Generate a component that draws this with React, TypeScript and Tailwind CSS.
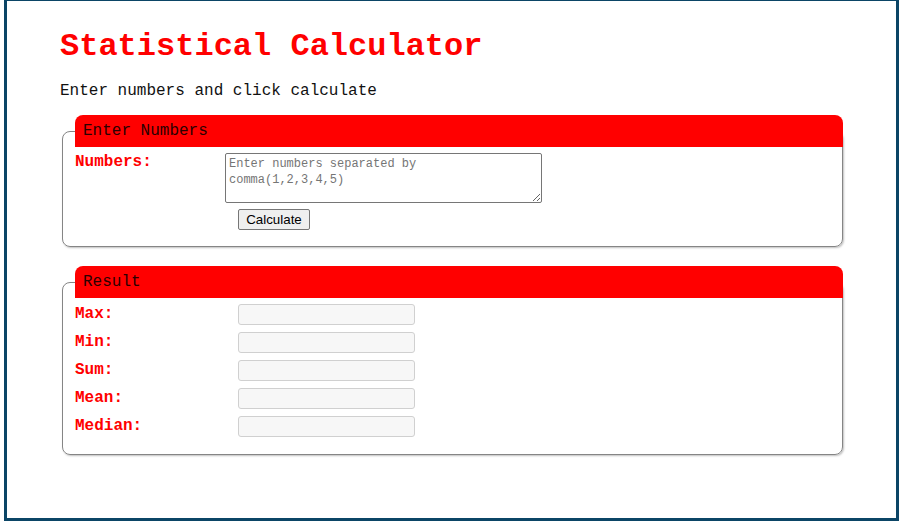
import React from "react";

const mono = "font-['Liberation_Mono','Courier_New',monospace]";

function ResultRow({ label }: { label: string }) {
  return (
    <div className="flex items-center h-[21px]">
      <span className={`w-[163px] mt-[-2px] text-[16px] leading-[18px] font-bold text-[#ff0000] ${mono}`}>{label}</span>
      <input
        readOnly
        className="w-[177px] h-[21px] bg-[#f7f7f7] border border-[#d0d0d0] rounded-[3px] outline-none"
      />
    </div>
  );
}

export default function App() {
  return (
    <div className="bg-white w-[902px] h-[521px] overflow-hidden">
      <div className="mt-[-2px] ml-[4px] w-[895px] h-[523px] border-[3px] border-[#0b4566] pl-[53px] pt-[28px]">
        <h1 className={`text-[32px] leading-[36px] font-bold text-[#ff0000] ${mono}`}>Statistical Calculator</h1>
        <p className={`mt-[17px] text-[16px] leading-[18px] text-[#111] ${mono}`}>Enter numbers and click calculate</p>

        <fieldset className="mt-[15px] ml-[2px] w-[781px] min-w-0 border border-[#858585] rounded-lg px-[12px] pb-[16px] shadow-[1px_1px_2px_rgba(0,0,0,0.25)]">
          <legend className={`w-[768px] h-[32px] bg-[#ff0000] rounded-t-lg pl-[8px] text-[16px] leading-[32px] text-[#2a0000] ${mono}`}>
            Enter Numbers
          </legend>
          <div className="flex pt-[6px]">
            <span className={`w-[150px] text-[16px] leading-[18px] font-bold text-[#ff0000] ${mono}`}>Numbers:</span>
            <div className="flex flex-col items-start">
              <textarea
                placeholder={"Enter numbers separated by\ncomma(1,2,3,4,5)"}
                className={`w-[317px] h-[50px] border border-[#767676] rounded-[2px] px-[3px] py-[2px] text-[12px] leading-[16px] placeholder:text-[#757575] outline-none resize ${mono}`}
              />
              <button className="mt-[6px] ml-[13px] w-[72px] h-[21px] bg-[#efefef] border border-[#767676] rounded-[2px] text-[13.33px] leading-[15px] text-black font-['Liberation_Sans',Arial,sans-serif]">
                Calculate
              </button>
            </div>
          </div>
        </fieldset>

        <fieldset className="mt-[19px] ml-[2px] w-[781px] min-w-0 border border-[#858585] rounded-lg px-[12px] pb-[17px] shadow-[1px_1px_2px_rgba(0,0,0,0.25)]">
          <legend className={`w-[768px] h-[32px] bg-[#ff0000] rounded-t-lg pl-[8px] text-[16px] leading-[32px] text-[#2a0000] ${mono}`}>
            Result
          </legend>
          <div className="flex flex-col gap-[7px] pt-[6px]">
            <ResultRow label="Max:" />
            <ResultRow label="Min:" />
            <ResultRow label="Sum:" />
            <ResultRow label="Mean:" />
            <ResultRow label="Median:" />
          </div>
        </fieldset>
      </div>
    </div>
  );
}
